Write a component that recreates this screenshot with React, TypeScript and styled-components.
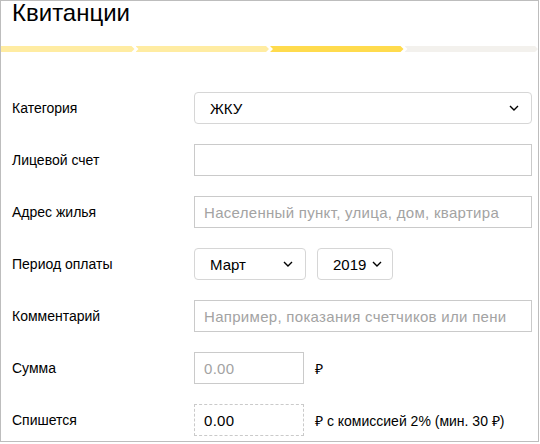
import styled, { createGlobalStyle } from "styled-components";

const GlobalStyle = createGlobalStyle`
  html, body {
    margin: 0;
    padding: 0;
    background: #fff;
  }
  body {
    font-family: "Liberation Sans", Arial, sans-serif;
    color: #000;
  }
`;

const Page = styled.div`
  width: 537px;
  height: 440px;
  border: 1px solid #bdbdbd;
  overflow: hidden;
  background: #fff;
`;

const Title = styled.h1`
  margin: 0;
  padding-left: 11px;
  font-size: 24px;
  line-height: 24px;
  font-weight: normal;
`;

const Progress = styled.div`
  display: flex;
  gap: 1px;
  margin-top: 21px;
  height: 6px;
`;

const Step = styled.div<{ $color: string; $first?: boolean }>`
  flex: 1;
  background: ${p => p.$color};
  clip-path: ${p =>
    p.$first
      ? "polygon(0 0, calc(100% - 3px) 0, 100% 50%, calc(100% - 3px) 100%, 0 100%)"
      : "polygon(0 0, calc(100% - 3px) 0, 100% 50%, calc(100% - 3px) 100%, 0 100%, 3px 50%)"};
`;

const Form = styled.div`
  display: flex;
  flex-direction: column;
  gap: 20px;
  padding: 40px 6px 0 11px;
`;

const Row = styled.div`
  display: grid;
  grid-template-columns: 182px 1fr;
  align-items: center;
  height: 32px;
`;

const Label = styled.span`
  font-size: 14px;
`;

const Fields = styled.div`
  display: flex;
  align-items: center;
  gap: 11px;
  height: 32px;
`;

const Select = styled.div<{ $width?: number }>`
  box-sizing: border-box;
  display: flex;
  align-items: center;
  justify-content: space-between;
  gap: 6px;
  height: 32px;
  width: ${p => (p.$width ? `${p.$width}px` : "100%")};
  padding: 0 12px 0 15px;
  border: 1px solid #d6d6d6;
  border-radius: 4px;
  font-size: 15px;

  svg {
    flex-shrink: 0;
  }
`;

const Input = styled.div<{ $width?: number; $dashed?: boolean; $empty?: boolean }>`
  box-sizing: border-box;
  display: flex;
  align-items: center;
  height: 32px;
  width: ${p => (p.$width ? `${p.$width}px` : "100%")};
  padding: 0 9px;
  border: 1px ${p => (p.$dashed ? "dashed" : "solid")} #cacaca;
  font-size: 15px;
  letter-spacing: 0.3px;
  color: ${p => (p.$empty ? "#a3a3a3" : "#000")};
  white-space: nowrap;
  overflow: hidden;
`;

const Note = styled.span`
  font-size: 14px;
`;

function Chevron() {
  return (
    <svg width="10" height="6" viewBox="0 0 10 6">
      <polyline
        points="1,1 5,5 9,1"
        fill="none"
        stroke="#000"
        strokeWidth="1.4"
      />
    </svg>
  );
}

export default function App(): JSX.Element {
  return (
    <Page>
      <GlobalStyle />
      <Title>Квитанции</Title>
      <Progress>
        <Step $color="#ffeca2" $first />
        <Step $color="#ffeca2" />
        <Step $color="#ffdb4d" />
        <Step $color="#f3f1ed" />
      </Progress>
      <Form>
        <Row>
          <Label>Категория</Label>
          <Select>
            ЖКУ
            <Chevron />
          </Select>
        </Row>
        <Row>
          <Label>Лицевой счет</Label>
          <Input />
        </Row>
        <Row>
          <Label>Адрес жилья</Label>
          <Input $empty>Населенный пункт, улица, дом, квартира</Input>
        </Row>
        <Row>
          <Label>Период оплаты</Label>
          <Fields>
            <Select $width={112}>
              Март
              <Chevron />
            </Select>
            <Select $width={76}>
              2019
              <Chevron />
            </Select>
          </Fields>
        </Row>
        <Row>
          <Label>Комментарий</Label>
          <Input $empty>Например, показания счетчиков или пени</Input>
        </Row>
        <Row>
          <Label>Сумма</Label>
          <Fields>
            <Input $width={110} $empty>0.00</Input>
            <Note>₽</Note>
          </Fields>
        </Row>
        <Row>
          <Label>Спишется</Label>
          <Fields>
            <Input $width={110} $dashed>0.00</Input>
            <Note>₽ с комиссией 2% (мин. 30 ₽)</Note>
          </Fields>
        </Row>
      </Form>
    </Page>
  );
}
